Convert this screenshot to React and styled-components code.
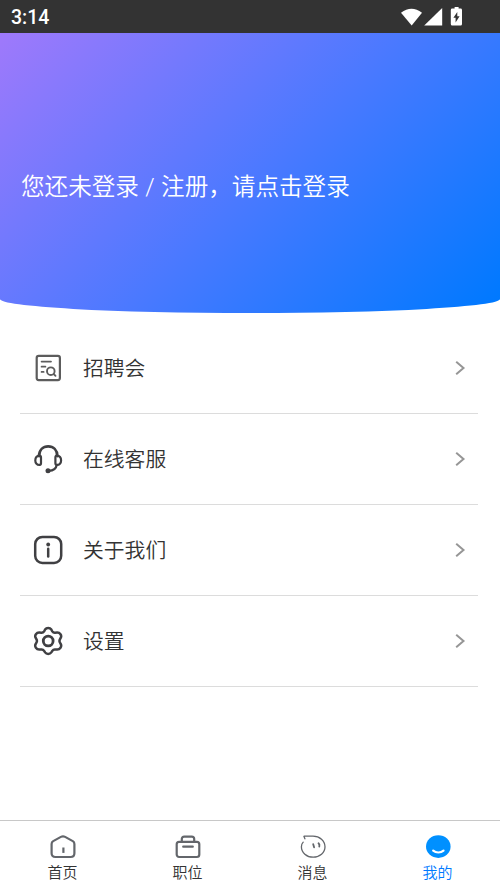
import React from 'react';
import styled, { createGlobalStyle } from 'styled-components';

const GlobalStyle = createGlobalStyle`
  * { box-sizing: border-box; }
  body {
    margin: 0;
    background: #fff;
    font-family: Roboto, "Noto Sans CJK SC", sans-serif;
  }
`;

const Screen = styled.div`
  display: flex;
  flex-direction: column;
  width: 500px;
  height: 889px;
  overflow: hidden;
  background: #fff;
`;

const StatusBar = styled.header`
  display: flex;
  flex: none;
  align-items: center;
  justify-content: space-between;
  height: 33.4px;
  padding: 2px 37px 0 11px;
  background: #333;
  color: #fff;
`;

const Clock = styled.span`
  font: 500 19.5px/24px Roboto, sans-serif;
`;

const StatusIcons = styled.svg`
  display: block;
  width: 62px;
  height: 20px;
  margin-top: -2px;
`;

const Hero = styled.section`
  flex: none;
  height: 279.2px;
  padding: 137px 21px 0;
  border-radius: 0 0 50% 50% / 0 0 14px 14px;
  background: linear-gradient(135deg, #9f79fb 0%, #4a79ff 52%, #0079ff 98%);
`;

const LoginPrompt = styled.h1`
  margin: 0;
  color: #fff;
  font-family: Roboto, "Noto Sans CJK SC", sans-serif;
  font-size: 23.6px;
  font-weight: 350;
  line-height: 34px;
  word-spacing: 0.6px;
  white-space: nowrap;
`;

const Menu = styled.nav`
  flex: 1;
  padding: 10px 22px 0 20px;
`;

const MenuRow = styled.a`
  display: flex;
  align-items: center;
  height: 91px;
  padding: 0 11px 0 13px;
  border-bottom: 1.4px solid #dcdcdc;
  color: #333;
`;

const MenuIcon = styled.svg`
  flex: none;
  width: 30px;
  height: 30px;
  fill: none;
  stroke: ${(p) => p.$tone || '#404043'};
  stroke-width: 2.7;
  stroke-linecap: round;
  stroke-linejoin: round;
`;

const MenuLabel = styled.span`
  flex: 1;
  margin-left: 20px;
  padding-bottom: 2px;
  font-family: "Noto Sans CJK SC", sans-serif;
  font-size: 20.8px;
  font-weight: 350;
  line-height: 30px;
`;

const Chevron = styled.svg`
  width: 14px;
  height: 16px;
  fill: none;
  stroke: #969696;
  stroke-width: 2;
`;

const TabBar = styled.nav`
  display: grid;
  flex: none;
  grid-template-columns: repeat(4, 1fr);
  height: 69px;
  border-top: 1px solid #c8c8c8;
`;

const Tab = styled.a`
  display: flex;
  flex-direction: column;
  align-items: center;
  padding-top: 11px;
  color: ${(p) => (p.$active ? '#007aff' : '#333')};
`;

const TabIcon = styled.svg`
  width: 28px;
  height: 28px;
  fill: none;
  stroke: #63666b;
  stroke-width: 2.2;
  stroke-linecap: round;
  stroke-linejoin: round;
`;

const TabLabel = styled.span`
  margin-top: 1px;
  font-family: "Noto Sans CJK SC", sans-serif;
  font-size: 15px;
  font-weight: 350;
  line-height: 22px;
`;

const menuItems = [
  {
    label: '招聘会',
    tone: '#5c5c5c',
    art: (
      <>
        <rect x="3.7" y="2.9" width="23.2" height="24.2" rx="2" strokeWidth="2.2" />
        <path d="M8.6 8.6h9.4M8.6 13.7h3.8M8.6 18.9h2" strokeWidth="1.8" />
        <circle cx="17.8" cy="18.2" r="3.8" strokeWidth="1.9" />
        <path d="m20.7 21 1.8 1.8" strokeWidth="1.9" />
      </>
    ),
  },
  {
    label: '在线客服',
    art: (
      <>
        <path d="M6 12.1C6.2 6.1 10 2.4 15.2 2.4s9 3.7 9.2 9.7" />
        <path d="M6.6 11.7c-2.7.2-4.3 2.1-4.3 4.7s1.7 4.7 4.4 4.5c1.2-.1 1.4-.8 1.3-2v-5.2c0-1.3-.2-2.1-1.4-2ZM23.8 11.7c2.7.2 4.3 2.1 4.3 4.7s-1.7 4.7-4.4 4.5c-1.2-.1-1.4-.8-1.3-2v-5.2c0-1.3.2-2.1 1.4-2Z" strokeWidth="2.2" />
        <path d="M23.8 20.8c-.6 3.7-3.6 5.9-8 6.1" strokeWidth="2.2" />
        <circle cx="15" cy="26.8" r="2.5" fill="#404043" stroke="none" />
      </>
    ),
  },
  {
    label: '关于我们',
    art: (
      <>
        <rect x="2.2" y="1.9" width="26" height="26" rx="7.2" strokeWidth="2.5" />
        <path d="M15.2 13.7v7.7" strokeWidth="2.5" />
        <circle cx="15.2" cy="9.5" r="1.9" fill="#404043" stroke="none" />
      </>
    ),
  },
  {
    label: '设置',
    art: (
      <>
        <path d="M12.1 3.5c1.4-2.1 4.8-2.1 6.2 0l1 1.8c.7 1.1 1.5 1.5 2.8 1.4l2-.1c2.9-.1 4.9 2.8 3.7 5.1l-.9 1.7c-.6 1.1-.6 2 0 3.1l.9 1.7c1.2 2.3-.8 5.4-3.7 5.3l-2-.1c-1.3-.1-2.1.3-2.8 1.4l-1 1.6c-1.4 2.1-4.8 2.1-6.2 0l-1-1.6c-.7-1.1-1.5-1.5-2.8-1.4l-2 .1c-2.9.1-4.9-3-3.7-5.3l.9-1.7c.6-1.1.6-2 0-3.1l-.9-1.7C1.4 9.4 3.4 6.5 6.3 6.6l2 .1c1.3.1 2.1-.3 2.8-1.4Z" strokeWidth="2.5" />
        <circle cx="15.2" cy="15" r="4.9" strokeWidth="2.8" />
      </>
    ),
  },
];

const tabs = [
  {
    label: '首页',
    art: (
      <>
        <path d="M4.2 9.1 11.9 4.9q2.1-1.2 4.2 0l7.7 4.2q1.6 1 1.6 2.9v9.2q0 3.8-3.8 3.8H6.4q-3.8 0-3.8-3.8V12q0-1.9 1.6-2.9Z" />
        <path d="M14.4 15.5v5.4" strokeLinecap="butt" />
      </>
    ),
  },
  {
    label: '职位',
    art: (
      <>
        <rect x="2.7" y="9.9" width="22.6" height="15.1" rx="2.4" />
        <path d="M7.8 9.5V7.1q0-2.5 2.5-2.5h7.4q2.5 0 2.5 2.5v2.4M9.2 14.7h9.6" />
      </>
    ),
  },
  {
    label: '消息',
    art: (
      <>
        <path d="M5.5 4.2H14C20.7 4.2 26 8.8 26 14.8S20.7 25.2 14.2 25.2 2.4 20.6 2.4 14.8c0-2.2.6-3.5 1.8-4.7M4.9 4.3l1 2.5" strokeWidth="1.3" />
        <path d="m14.2 12.2.9 3.1M19.5 11.3q1.4 1.2.8 3.3" strokeWidth="1.8" />
      </>
    ),
  },
  {
    label: '我的',
    active: true,
    art: (
      <>
        <ellipse cx="14.3" cy="14.6" rx="12.3" ry="11.3" fill="#0090ff" stroke="none" />
        <path d="M9.2 18.6c2.8 2.5 7.5 2.5 10.3 0" stroke="#fff" />
      </>
    ),
  },
];

export default function App() {
  return (
    <>
      <GlobalStyle />
      <Screen>
        <StatusBar>
          <Clock>3:14</Clock>
          <StatusIcons viewBox="0 0 62 20" fill="#fff">
            <path d="M0 5.7Q10.5-2 21 5.7L10.7 18.4Z" />
            <path d="M22.7 18.4h18V1Z" transform="translate(.5 0)" />
            <path fillRule="evenodd" d="M53.6 0h4v1.6h2q1.4 0 1.4 1.4v14q0 1.5-1.4 1.5h-8.4q-1.4 0-1.4-1.5V3q0-1.4 1.4-1.4h2.4ZM56.3 5l-3.9 5.7h2.2v4.9l4-6.3h-2.3Z" />
          </StatusIcons>
        </StatusBar>
        <Hero>
          <LoginPrompt>您还未登录 / 注册，请点击登录</LoginPrompt>
        </Hero>
        <Menu>
          {menuItems.map(({ label, tone, art }) => (
            <MenuRow key={label}>
              <MenuIcon $tone={tone} viewBox="0 0 30 30">{art}</MenuIcon>
              <MenuLabel>{label}</MenuLabel>
              <Chevron viewBox="0 0 14 16">
                <path d="m3.2 1.8 7.3 6.2-7.3 6.2" />
              </Chevron>
            </MenuRow>
          ))}
        </Menu>
        <TabBar>
          {tabs.map(({ label, active, art }) => (
            <Tab key={label} $active={active}>
              <TabIcon viewBox="0 0 28 28">{art}</TabIcon>
              <TabLabel>{label}</TabLabel>
            </Tab>
          ))}
        </TabBar>
      </Screen>
    </>
  );
}
